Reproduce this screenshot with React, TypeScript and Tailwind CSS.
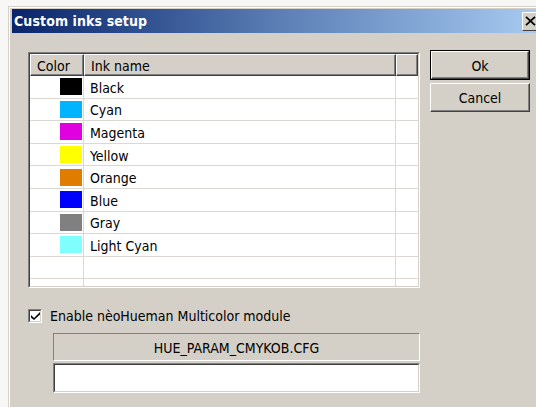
import React from "react";

type Ink = { name: string; swatch: string };

const inks: Ink[] = [
  { name: "Black", swatch: "bg-[#000000]" },
  { name: "Cyan", swatch: "bg-[#00b4ff]" },
  { name: "Magenta", swatch: "bg-[#e000e0]" },
  { name: "Yellow", swatch: "bg-[#ffff00]" },
  { name: "Orange", swatch: "bg-[#e07c00]" },
  { name: "Blue", swatch: "bg-[#0000ff]" },
  { name: "Gray", swatch: "bg-[#808080]" },
  { name: "Light Cyan", swatch: "bg-[#80ffff]" },
];

const cols = "grid grid-cols-[54px_312px_22px]";

function HeaderCell({ children }: { children?: React.ReactNode }) {
  return (
    <div className="h-[22px] bg-[#d4d0c8] border border-t-white border-l-white border-b-[#404040] border-r-[#404040] shadow-[inset_-1px_-1px_#808080] pl-[6px] pt-[1px] flex items-center text-[14px] leading-none text-black">
      {children}
    </div>
  );
}

function Row({ ink }: { ink?: Ink }) {
  return (
    <div className={`${cols} h-[22.6px] shrink-0`}>
      <div className="border-r border-b border-[#dcd9d2] flex items-center justify-end pr-[1px]">
        {ink && <div className={`w-[22px] h-[17px] ${ink.swatch}`} />}
      </div>
      <div className="border-r border-b border-[#dcd9d2] flex items-center pl-[6px] pt-[2px] text-[14px] leading-none text-black">
        {ink?.name}
      </div>
      <div className="border-b border-[#dcd9d2]" />
    </div>
  );
}

function Button({ label, isDefault, tall }: { label: string; isDefault?: boolean; tall?: boolean }) {
  const inner = (
    <div className="h-full border border-t-white border-l-white border-b-[#404040] border-r-[#404040] shadow-[inset_-1px_-1px_#808080] flex items-center justify-center pt-[1px] text-[14px] leading-none text-black bg-[#d4d0c8]">
      {label}
    </div>
  );
  return (
    <div className={`w-[100px] ${tall ? "h-[30px]" : "h-[29px]"} ${isDefault ? "border border-black" : ""}`}>{inner}</div>
  );
}

export default function App() {
  return (
    <div className="w-[536px] h-[407px] overflow-hidden bg-[#f7f7f5] font-['DejaVu_Sans_Condensed','DejaVu_Sans',sans-serif]">
      <div className="ml-[8px] mt-[6px] h-[401px] border-t border-l border-[#d4d0c8] bg-[#d4d0c8]">
        <div className="h-full border-t border-l border-white pt-[1px] pl-[2px]">
          {/* caption bar */}
          <div className="h-[24px] bg-gradient-to-r from-[#0a246a] via-[#5a7db4] to-[#a6caf0] flex items-center justify-between">
            <span className="pl-[2px] text-white font-bold text-[14px] leading-none tracking-[0.1px]">Custom inks setup</span>
            <div className="w-[17px] h-[19px] mr-[-3px] bg-[#d4d0c8] border border-t-white border-l-white border-b-[#404040] border-r-[#404040] flex items-center justify-center pr-[1px]">
              <svg width="11" height="10" viewBox="0 0 11 10">
                <path d="M1 0.8 L10 9.2 M10 0.8 L1 9.2" stroke="#000" strokeWidth="1.8" />
              </svg>
            </div>
          </div>

          {/* dialog body */}
          <div className="flex pt-[17px] pl-[16px]">
            <div className="flex flex-col w-[392px]">
              <div className="mt-[2px] w-[392px] h-[236px] border border-t-[#808080] border-l-[#808080] border-b-white border-r-white">
                <div className="h-full border border-t-[#404040] border-l-[#404040] border-b-[#d4d0c8] border-r-[#d4d0c8] bg-white overflow-hidden flex flex-col">
                  <div className={cols}>
                    <HeaderCell>Color</HeaderCell>
                    <HeaderCell>Ink name</HeaderCell>
                    <HeaderCell />
                  </div>
                  {inks.map((ink) => (
                    <Row key={ink.name} ink={ink} />
                  ))}
                  <Row />
                  <Row />
                </div>
              </div>

              {/* module toggle */}
              <div className="mt-[20px] flex items-center h-[15px]">
                <div className="w-[14px] h-[14px] border border-t-[#808080] border-l-[#808080] border-b-white border-r-white">
                  <div className="w-full h-full border border-t-[#404040] border-l-[#404040] border-b-[#d4d0c8] border-r-[#d4d0c8] bg-white flex items-center justify-center">
                    <svg width="9" height="8" viewBox="0 0 9 8">
                      <path d="M0 3 L3 6 L9 0 L9 2.5 L3 8 L0 5.5 Z" fill="#000" />
                    </svg>
                  </div>
                </div>
                <span className="ml-[8px] pt-[1px] text-[14px] leading-none text-black">Enable nèoHueman Multicolor module</span>
              </div>

              {/* configuration file */}
              <div className="mt-[10px] ml-[25px] w-[367px] h-[28px] border border-t-[#808080] border-l-[#808080] border-b-white border-r-white flex items-center justify-center pt-[1px] text-[14px] leading-none text-black">
                HUE_PARAM_CMYKOB.CFG
              </div>
              <div className="mt-[2px] ml-[25px] w-[367px] h-[30px] border border-t-[#808080] border-l-[#808080] border-b-white border-r-white">
                <div className="h-full border border-t-[#404040] border-l-[#404040] border-b-[#d4d0c8] border-r-[#d4d0c8] bg-white" />
              </div>
            </div>

            {/* actions */}
            <div className="ml-[10px] flex flex-col gap-[3px]">
              <Button label="Ok" isDefault tall />
              <Button label="Cancel" />
            </div>
          </div>
        </div>
      </div>
    </div>
  );
}
